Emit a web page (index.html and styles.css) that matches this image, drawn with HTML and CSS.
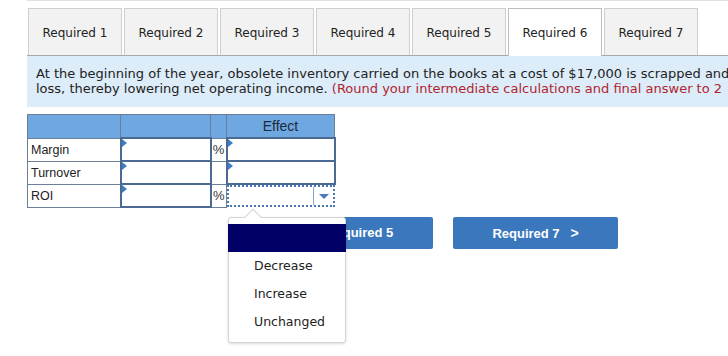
FILE: index.html
```html
<!DOCTYPE html>
<html lang="en">
<head>
    <meta charset="UTF-8">
    <title>Required 6</title>
    <link rel="stylesheet" href="styles.css">
</head>
<body>
    <div class="page">
        <div class="topline"></div>

        <ul class="tabs">
            <li class="tab">Required 1</li>
            <li class="tab">Required 2</li>
            <li class="tab">Required 3</li>
            <li class="tab">Required 4</li>
            <li class="tab">Required 5</li>
            <li class="tab active">Required 6</li>
            <li class="tab">Required 7</li>
        </ul>

        <div class="info">
            At the beginning of the year, obsolete inventory carried on the books at a cost of $17,000 is scrapped and<br>
            loss, thereby lowering net operating income. <span class="note">(Round your intermediate calculations and final answer to 2</span>
        </div>

        <div class="answer">
            <table class="grid">
                <tr class="head">
                    <th class="c-label"></th>
                    <th class="c-input"></th>
                    <th class="c-unit"></th>
                    <th class="c-effect">Effect</th>
                </tr>
                <tr>
                    <td class="label">Margin</td>
                    <td class="field"><span class="mark"></span></td>
                    <td class="unit">%</td>
                    <td class="field"><span class="mark"></span></td>
                </tr>
                <tr>
                    <td class="label">Turnover</td>
                    <td class="field"><span class="mark"></span></td>
                    <td class="unit"></td>
                    <td class="field"><span class="mark"></span></td>
                </tr>
                <tr>
                    <td class="label">ROI</td>
                    <td class="field"><span class="mark"></span></td>
                    <td class="unit">%</td>
                    <td class="select">
                        <div class="select-box">
                            <span class="arrow"></span>
                        </div>
                    </td>
                </tr>
            </table>

            <div class="menu">
                <div class="menu-hl"></div>
                <div class="menu-item">Decrease</div>
                <div class="menu-item">Increase</div>
                <div class="menu-item">Unchanged</div>
            </div>
        </div>

        <div class="nav">
            <a href="#" class="btn">&lt;&nbsp;&nbsp;&nbsp;Required 5</a>
            <a href="#" class="btn">Required 7&nbsp;&nbsp;&nbsp;<span class="chev">&gt;</span></a>
        </div>
    </div>
</body>
</html>
```

FILE: styles.css
```css
body {
    margin: 0;
    background-color: #fff;
    font-family: "DejaVu Sans", Verdana, sans-serif;
    color: #222;
}

.page {
    padding-left: 27px;
    min-height: 356px;
}

.topline {
    border-top: 1px solid #e2e2e2;
}

.tabs {
    list-style: none;
    margin: 7px 0 0 0;
    padding: 0 0 0 1px;
    display: flex;
    gap: 2px;
    border-bottom: 1px solid #a9a9a9;
    height: 47px;
}

.tab {
    width: 92px;
    height: 46px;
    border: 1px solid #cfcfcf;
    border-bottom: none;
    background-color: #f2f2f2;
    font-size: 12px;
    line-height: 48px;
    text-align: center;
    color: #222;
}

.tab.active {
    background-color: #fff;
    border-color: #bdbdbd;
    height: 47px;
}

.info {
    background-color: #dcecf9;
    padding: 10px 0 9px 9px;
    font-size: 13px;
    line-height: 15px;
    color: #222;
    white-space: nowrap;
    overflow: hidden;
    height: 32px;
}

.note {
    color: #b0252f;
}

.answer {
    position: relative;
    margin-top: 7px;
}

.grid {
    border-collapse: collapse;
    font-family: "Liberation Sans", Arial, sans-serif;
    font-size: 12.5px;
}

.grid th,
.grid td {
    border: 1px solid #6b7f99;
    padding: 0;
    height: 21px;
}

.head th {
    background-color: #6fa8e0;
    font-weight: normal;
    font-size: 14px;
    color: #1b2a3d;
    height: 22px;
}

.c-label { width: 92px; }
.c-input { width: 89px; }
.c-unit { width: 15px; }
.c-effect { width: 107px; }

.label {
    padding-left: 3px !important;
    color: #222;
}

.unit {
    text-align: center;
    font-size: 13px;
    color: #333;
}

.field {
    position: relative;
    border: 2px solid #4a6a94 !important;
    background-color: #fff;
}

.mark {
    position: absolute;
    left: 0;
    top: 0;
    width: 0;
    height: 0;
    border-top: 4px solid transparent;
    border-bottom: 4px solid transparent;
    border-left: 5px solid #3c7dc4;
}

.select {
    border: none !important;
    padding: 0 !important;
}

.select-box {
    position: relative;
    height: 18px;
    border: 2px dotted #4a74b0;
}

.arrow {
    position: absolute;
    right: 0;
    top: 0;
    width: 19px;
    height: 18px;
    border-left: 1px solid #8aa4c4;
}

.arrow::after {
    content: "";
    position: absolute;
    left: 5px;
    top: 7px;
    border-left: 5px solid transparent;
    border-right: 5px solid transparent;
    border-top: 5px solid #4a7cc0;
}

.menu {
    position: absolute;
    left: 201px;
    top: 103px;
    width: 116px;
    height: 124px;
    background-color: #fff;
    border: 1px solid #d4d4d4;
    border-radius: 3px;
    box-shadow: 0 1px 3px rgba(0, 0, 0, 0.15);
    z-index: 2;
}

.menu::before {
    content: "";
    position: absolute;
    left: 18px;
    top: -7px;
    width: 11px;
    height: 11px;
    background-color: #fff;
    border-left: 1px solid #d4d4d4;
    border-top: 1px solid #d4d4d4;
    transform: rotate(45deg);
}

.menu-hl {
    position: relative;
    margin: 6px -1px 0 -1px;
    height: 28px;
    background-color: #000066;
}

.menu-item {
    font-size: 12.5px;
    height: 28px;
    line-height: 28px;
    padding-left: 25px;
    color: #222;
}

.nav {
    display: flex;
    gap: 20px;
    margin: 9px 0 0 241px;
}

.btn {
    display: block;
    width: 165px;
    height: 32px;
    line-height: 32px;
    background-color: #3b77bd;
    border-radius: 2px;
    color: #fff;
    font-family: "Liberation Sans", Arial, sans-serif;
    font-weight: bold;
    font-size: 13px;
    text-align: center;
    text-decoration: none;
}

.chev {
    font-size: 14px;
}
```
